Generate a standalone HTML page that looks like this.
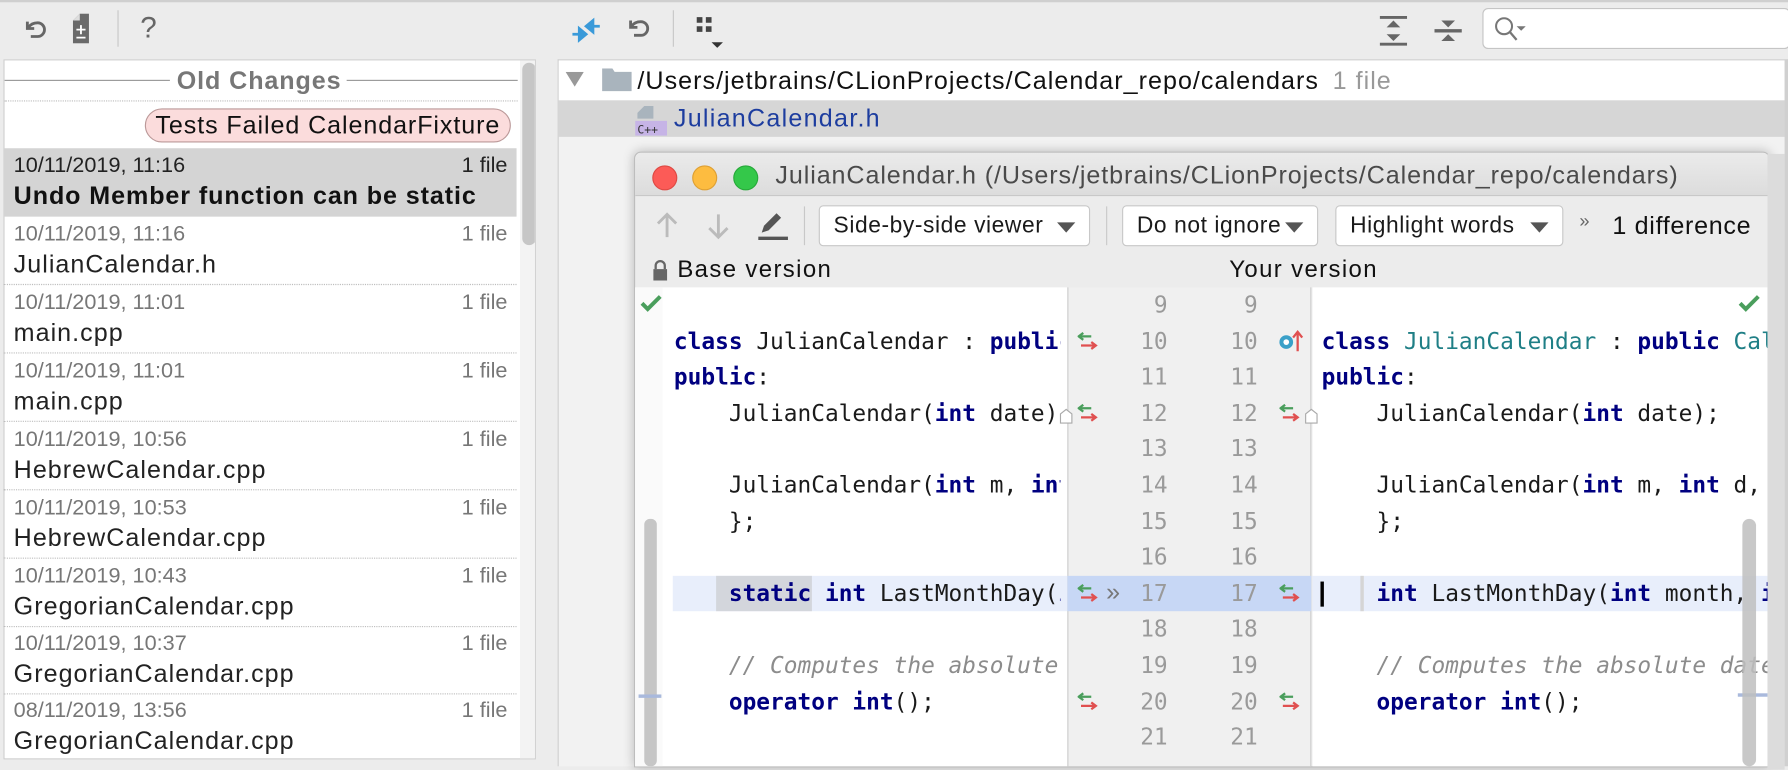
<!DOCTYPE html>
<html><head><meta charset="utf-8"><style>
*{margin:0;padding:0;box-sizing:border-box}
html,body{width:1788px;height:765px;overflow:hidden;background:#ececec}
#root{position:absolute;left:0;top:0;width:1568px;height:671px;transform:scale(1.1403);transform-origin:0 0;font-family:"Liberation Sans",sans-serif;font-size:20px;color:#1a1a1a}
.a{position:absolute}
.mono{font-family:"DejaVu Sans Mono","Liberation Mono",monospace;font-size:20px;white-space:pre;letter-spacing:0}
.k{color:#000080;font-weight:bold}
.c{color:#8c8c8c;font-style:italic}
.t{color:#1f7f86}
.ln{position:absolute;height:31.6px;line-height:31.6px}
.item{position:absolute;left:3px;width:450px;height:60px;border-bottom:1px dotted #bdbdbd}
.item .d{position:absolute;left:9px;top:5px;color:#777;font-size:19px}
.item .f{position:absolute;right:8px;top:5px;color:#777;font-size:19px}
.item .n{position:absolute;left:9px;top:29px;font-size:22px;letter-spacing:.9px;color:#222;white-space:nowrap}
.combo{position:absolute;top:180px;height:36px;background:#fff;border:1px solid #c8c8c8;border-radius:4px;line-height:34px;padding-left:12px;font-size:20px;letter-spacing:.5px}
.combo:after{content:"";position:absolute;right:12px;top:14px;border-left:8px solid transparent;border-right:8px solid transparent;border-top:9px solid #555}
</style></head><body><div id="root">
<div class="a" style="left:0;top:0;width:1568px;height:2px;background:#cfcfcf"></div>
<svg class="a" style="left:20px;top:14px" width="24" height="24" viewBox="0 0 24 24"><path d="M4 5v6h6" fill="none" stroke="#666" stroke-width="2.5"/><path d="M5 10C7 7 10 6 13 6a6 6 0 0 1 0 12H7" fill="none" stroke="#666" stroke-width="2.5"/></svg>
<svg class="a" style="left:62px;top:12px" width="18" height="26" viewBox="0 0 18 26"><path d="M8 0h8v26H2V6z" fill="#6a6a6a"/><path d="M2 6L8 0v6z" fill="#ddd"/><path d="M9 10v8M5 14h8M5 21h8" stroke="#fff" stroke-width="1.6"/></svg>
<div class="a" style="left:103px;top:9px;width:1px;height:32px;background:#c8c8c8"></div>
<div class="a" style="left:123px;top:9px;font-size:26px;color:#666">?</div>
<svg class="a" style="left:500px;top:14px" width="28" height="26" viewBox="0 0 28 26"><path d="M2 16h8M8 11v10l6-5zM26 9h-8M20 4v10l-6-5z" fill="#3a9ad9" stroke="#3a9ad9" stroke-width="2.4"/></svg>
<svg class="a" style="left:549px;top:13px" width="24" height="24" viewBox="0 0 24 24"><path d="M4 5v6h6" fill="none" stroke="#666" stroke-width="2.5"/><path d="M5 10C7 7 10 6 13 6a6 6 0 0 1 0 12H7" fill="none" stroke="#666" stroke-width="2.5"/></svg>
<div class="a" style="left:590px;top:9px;width:1px;height:32px;background:#c8c8c8"></div>
<svg class="a" style="left:610px;top:14px" width="26" height="28" viewBox="0 0 26 28"><path d="M1 1h5v5H1zM9 1h5v5H9zM1 9h5v5H1zM9 9h5v5H9z" fill="#444"/><path d="M14 23h10l-5 5z" fill="#333"/></svg>
<svg class="a" style="left:1210px;top:14px" width="24" height="26" viewBox="0 0 24 26"><path d="M0 1h24M0 25h24" stroke="#666" stroke-width="3"/><path d="M6 10l6-6 6 6zM6 16l6 6 6-6z" fill="#666"/></svg>
<svg class="a" style="left:1258px;top:14px" width="24" height="26" viewBox="0 0 24 26"><path d="M0 13h24" stroke="#666" stroke-width="3"/><path d="M6 4l6 6 6-6zM6 22l6-6 6 6z" fill="#666"/></svg>
<div class="a" style="left:1300px;top:7px;width:270px;height:36px;background:#fff;border:1px solid #c5c5c5;border-radius:5px"></div>
<svg class="a" style="left:1310px;top:14px" width="30" height="24" viewBox="0 0 30 24"><circle cx="9" cy="9" r="7" fill="none" stroke="#777" stroke-width="1.8"/><path d="M14 14l6 7" stroke="#777" stroke-width="2"/><path d="M20 9h8l-4 4z" fill="#777"/></svg>

<div class="a" style="left:3px;top:52px;width:467px;height:614px;background:#fff;border:1px solid #cfcfcf;overflow:hidden">
 <div class="a" style="left:0;top:17px;width:145px;height:1px;background:#999"></div>
 <div class="a" style="left:151px;top:5px;font-weight:bold;color:#777;font-size:22px;letter-spacing:.8px">Old Changes</div>
 <div class="a" style="left:300px;top:17px;width:150px;height:1px;background:#999"></div>
 <div class="a" style="left:0;top:35px;width:450px;border-bottom:1px dotted #bbb"></div>
 <div class="a" style="left:123px;top:42px;width:321px;height:30px;background:#fbdcdc;border:1px solid #b99;border-radius:15px;line-height:28px;text-align:center;font-size:22px;letter-spacing:.8px;color:#111;white-space:nowrap">Tests Failed CalendarFixture</div>
 <div class="a" style="left:452px;top:0;width:15px;height:614px;background:#f3f3f3"></div>
 <div class="a" style="left:454px;top:2px;width:12px;height:160px;background:#c6c6c6;border-radius:6px"></div>
</div>
<div class="item" style="top:130px;background:#d4d4d4;border-bottom:none"><span class="d" style="color:#222">10/11/2019, 11:16</span><span class="f" style="color:#222">1 file</span><span class="n" style="font-weight:bold;color:#111;letter-spacing:.8px">Undo Member function can be static</span></div>
<div class="item" style="top:190px"><span class="d">10/11/2019, 11:16</span><span class="f">1 file</span><span class="n">JulianCalendar.h</span></div>
<div class="item" style="top:250px"><span class="d">10/11/2019, 11:01</span><span class="f">1 file</span><span class="n">main.cpp</span></div>
<div class="item" style="top:310px"><span class="d">10/11/2019, 11:01</span><span class="f">1 file</span><span class="n">main.cpp</span></div>
<div class="item" style="top:370px"><span class="d">10/11/2019, 10:56</span><span class="f">1 file</span><span class="n">HebrewCalendar.cpp</span></div>
<div class="item" style="top:430px"><span class="d">10/11/2019, 10:53</span><span class="f">1 file</span><span class="n">HebrewCalendar.cpp</span></div>
<div class="item" style="top:490px"><span class="d">10/11/2019, 10:43</span><span class="f">1 file</span><span class="n">GregorianCalendar.cpp</span></div>
<div class="item" style="top:549px"><span class="d">10/11/2019, 10:37</span><span class="f">1 file</span><span class="n">GregorianCalendar.cpp</span></div>
<div class="item" style="top:608px;border-bottom:none;height:56px"><span class="d">08/11/2019, 13:56</span><span class="f">1 file</span><span class="n">GregorianCalendar.cpp</span></div>

<div class="a" style="left:489px;top:52px;width:1079px;height:620px;background:#f2f2f2;border-left:1px solid #cfcfcf;border-top:1px solid #cfcfcf"></div>
<div class="a" style="left:490px;top:53px;width:1076px;height:35px;background:#fff"></div>
<div class="a" style="left:490px;top:88px;width:1076px;height:32px;background:#d6d6d6"></div>
<div class="a" style="left:1565px;top:52px;width:3px;height:620px;background:#d0d0d0"></div>
<svg class="a" style="left:496px;top:63px" width="16" height="14"><path d="M0 0h16L8 13z" fill="#999"/></svg>
<svg class="a" style="left:528px;top:60px" width="26" height="20"><path d="M0 0h9l2 3h15v17H0z" fill="#a9b4bd"/></svg>
<div class="a" style="left:559px;top:58px;font-size:22px;letter-spacing:.9px;color:#111;white-space:nowrap">/Users/jetbrains/CLionProjects/Calendar_repo/calendars<span style="color:#999;margin-left:12px">1 file</span></div>
<svg class="a" style="left:557px;top:93px" width="28" height="26"><path d="M8 0h8v11H2V6z" fill="#a9b4bd"/><rect x="0" y="13" width="28" height="13" fill="#c6b4e6"/><text x="2" y="24" font-family="DejaVu Sans Mono" font-size="10" fill="#333">C++</text></svg>
<div class="a" style="left:591px;top:91px;font-size:22px;letter-spacing:1.1px;color:#1d3d9f">JulianCalendar.h</div>

<div class="a" style="left:556px;top:133px;width:996px;height:540px;box-shadow:0 0 10px rgba(0,0,0,.25);border-radius:6px 6px 0 0;background:#ececec;overflow:hidden;border:1px solid #bdbdbd">
 <div class="a" style="left:0;top:0;width:996px;height:38px;background:linear-gradient(#ebebeb,#dcdcdc);border-bottom:1px solid #c8c8c8"></div>
 <div class="a" style="left:15px;top:11px;width:22px;height:22px;border-radius:50%;background:#fc5b57;border:1px solid #de4a44"></div>
 <div class="a" style="left:50px;top:11px;width:22px;height:22px;border-radius:50%;background:#fdbc40;border:1px solid #dea034"></div>
 <div class="a" style="left:86px;top:11px;width:22px;height:22px;border-radius:50%;background:#34c84a;border:1px solid #27a93a"></div>
 <div class="a" style="left:123px;top:7px;font-size:22px;letter-spacing:.8px;color:#4a4a4a;white-space:nowrap">JulianCalendar.h (/Users/jetbrains/CLionProjects/Calendar_repo/calendars)</div>
</div>
<svg class="a" style="left:575px;top:186px" width="20" height="24"><path d="M10 2v20M2 10l8-8 8 8" fill="none" stroke="#bbb" stroke-width="2.5"/></svg>
<svg class="a" style="left:620px;top:186px" width="20" height="24"><path d="M10 2v20M2 14l8 8 8-8" fill="none" stroke="#bbb" stroke-width="2.5"/></svg>
<svg class="a" style="left:664px;top:184px" width="28" height="28"><path d="M4 20l2-6L17 3l4 4L10 18z" fill="#555"/><path d="M1 25h26" stroke="#555" stroke-width="3"/></svg>
<div class="a" style="left:705px;top:181px;width:1px;height:34px;background:#c8c8c8"></div>
<div class="combo" style="left:718px;width:238px">Side-by-side viewer</div>
<div class="a" style="left:970px;top:181px;width:1px;height:34px;background:#c8c8c8"></div>
<div class="combo" style="left:984px;width:172px">Do not ignore</div>
<div class="combo" style="left:1171px;width:200px">Highlight words</div>
<div class="a" style="left:1385px;top:186px;font-size:16px;color:#666">»</div>
<div class="a" style="left:1414px;top:185px;font-size:22px;letter-spacing:.6px;color:#111;white-space:nowrap">1 difference</div>
<svg class="a" style="left:572px;top:227px" width="14" height="20"><path d="M3 9V6a4 4 0 0 1 8 0v3" fill="none" stroke="#666" stroke-width="2"/><rect x="1" y="9" width="12" height="10" fill="#666"/></svg>
<div class="a" style="left:594px;top:225px;font-size:21px;letter-spacing:1.2px;color:#111">Base version</div>
<div class="a" style="left:1078px;top:225px;font-size:21px;letter-spacing:1.2px;color:#111">Your version</div>

<div class="a" style="left:557px;top:252px;width:379px;height:420px;background:#fff;overflow:hidden">
 <div class="a" style="left:0;top:0;width:24px;height:420px;background:#fafafa"></div>
 <div class="a" style="left:33px;top:252.8px;width:346px;height:31.6px;background:#e8eefb"></div>
 <div class="a" style="left:71px;top:252.8px;width:84px;height:31.6px;background:#d3d6dc"></div>
 <div class="a" style="left:8px;top:203px;width:11px;height:217px;background:#c6c6c6;border-radius:5px"></div>
 <div class="a" style="left:3px;top:357px;width:20px;height:3px;background:#a9b9dc"></div>
</div>
<svg class="a" style="left:561px;top:258px" width="20" height="16"><path d="M2 8l5 5 11-11" fill="none" stroke="#4a9e5c" stroke-width="3.5"/></svg>
<div class="a" style="left:936px;top:252px;width:214px;height:420px;background:#f0f0f0;border-left:1.5px solid #cfcfcf;border-right:1.5px solid #cfcfcf"></div>
<div class="a" style="left:936px;top:504.8px;width:214px;height:31.6px;background:#c7d7f5"></div>
<div class="a" style="left:1151px;top:252px;width:399px;height:420px;background:#fff"></div>
<div class="a" style="left:1151px;top:504.8px;width:399px;height:31.6px;background:#e8eefb"></div>
<div class="a" style="left:1158px;top:510px;width:3px;height:22px;background:#000"></div>
<div class="a" style="left:1193px;top:504.8px;width:3px;height:31.6px;background:#d5d5d5"></div>
<div class="a" style="left:1524px;top:608px;width:26px;height:3px;background:#a9b9dc"></div>
<svg class="a" style="left:1524px;top:258px" width="20" height="16"><path d="M2 8l5 5 11-11" fill="none" stroke="#4a9e5c" stroke-width="3.5"/></svg>
<div class="a" style="left:1550px;top:135px;width:15px;height:540px;background:#dcdcdc"></div>

<div class="a" style="left:557px;top:252px;width:373px;height:420px;overflow:hidden">
 <div class="ln mono" style="left:34px;top:31.6px"><span class="k">class</span> JulianCalendar : <span class="k">public</span> Calendar</div>
 <div class="ln mono" style="left:34px;top:63.2px"><span class="k">public</span>:</div>
 <div class="ln mono" style="left:34px;top:94.8px">    JulianCalendar(<span class="k">int</span> date);</div>
 <div class="ln mono" style="left:34px;top:158px">    JulianCalendar(<span class="k">int</span> m, <span class="k">int</span> d, <span class="k">int</span> y);</div>
 <div class="ln mono" style="left:34px;top:189.6px">    };</div>
 <div class="ln mono" style="left:34px;top:252.8px">    <span class="k">static</span> <span class="k">int</span> LastMonthDay(<span class="k">int</span> month, <span class="k">int</span> year);</div>
 <div class="ln mono c" style="left:34px;top:316px">    // Computes the absolute date from Julian</div>
 <div class="ln mono" style="left:34px;top:347.6px">    <span class="k">operator</span> <span class="k">int</span>();</div>
</div>
<div class="a" style="left:1151px;top:252px;width:399px;height:420px;overflow:hidden">
 <div class="ln mono" style="left:8px;top:31.6px"><span class="k">class</span> <span class="t">JulianCalendar</span> : <span class="k">public</span> <span class="t">Calendar</span></div>
 <div class="ln mono" style="left:8px;top:63.2px"><span class="k">public</span>:</div>
 <div class="ln mono" style="left:8px;top:94.8px">    JulianCalendar(<span class="k">int</span> date);</div>
 <div class="ln mono" style="left:8px;top:158px">    JulianCalendar(<span class="k">int</span> m, <span class="k">int</span> d, <span class="k">int</span> y);</div>
 <div class="ln mono" style="left:8px;top:189.6px">    };</div>
 <div class="ln mono" style="left:8px;top:252.8px">    <span class="k">int</span> LastMonthDay(<span class="k">int</span> month, <span class="k">int</span> year);</div>
 <div class="ln mono c" style="left:8px;top:316px">    // Computes the absolute date from Julian</div>
 <div class="ln mono" style="left:8px;top:347.6px">    <span class="k">operator</span> <span class="k">int</span>();</div>
</div>
<div class="a" style="left:1528px;top:455px;width:12px;height:217px;background:rgba(190,190,190,.85);border-radius:6px"></div>

<div class="a mono" style="left:984px;top:252px;width:40px;line-height:31.6px;text-align:right;color:#9a9a9a">9
10
11
12
13
14
15
16
17
18
19
20
21</div>
<div class="a mono" style="left:1063px;top:252px;width:40px;line-height:31.6px;text-align:right;color:#9a9a9a">9
10
11
12
13
14
15
16
17
18
19
20
21</div>
<svg width="0" height="0" style="position:absolute"><defs><g id="ar"><path d="M2 4h10M5 1L1 4l4 3" fill="none" stroke="#4a9e5c" stroke-width="2"/><path d="M3 12h12M12 9l4 3-4 3" fill="none" stroke="#e05050" stroke-width="2"/></g></defs></svg>
<svg class="a" style="left:945px;top:291px" width="18" height="18"><use href="#ar"/></svg>
<svg class="a" style="left:945px;top:354px" width="18" height="18"><use href="#ar"/></svg>
<svg class="a" style="left:945px;top:512px" width="18" height="18"><use href="#ar"/></svg>
<svg class="a" style="left:945px;top:607px" width="18" height="18"><use href="#ar"/></svg>
<svg class="a" style="left:1122px;top:354px" width="18" height="18"><use href="#ar"/></svg>
<svg class="a" style="left:1122px;top:512px" width="18" height="18"><use href="#ar"/></svg>
<svg class="a" style="left:1122px;top:607px" width="18" height="18"><use href="#ar"/></svg>
<div class="a" style="left:970px;top:506px;font-size:22px;color:#777">»</div>
<svg class="a" style="left:1121px;top:289px" width="24" height="20"><circle cx="7" cy="11" r="6" fill="#3aa0c8"/><circle cx="7" cy="11" r="2.5" fill="#fff"/><path d="M17 19V3M13 7l4-5 4 5" fill="none" stroke="#e05050" stroke-width="2"/></svg>
<svg class="a" style="left:929px;top:358px" width="12" height="14"><path d="M1 13V5l5-4 5 4v8z" fill="#fff" stroke="#aaa"/></svg>
<svg class="a" style="left:1144px;top:358px" width="12" height="14"><path d="M1 13V5l5-4 5 4v8z" fill="#fff" stroke="#aaa"/></svg>
</div></body></html>
